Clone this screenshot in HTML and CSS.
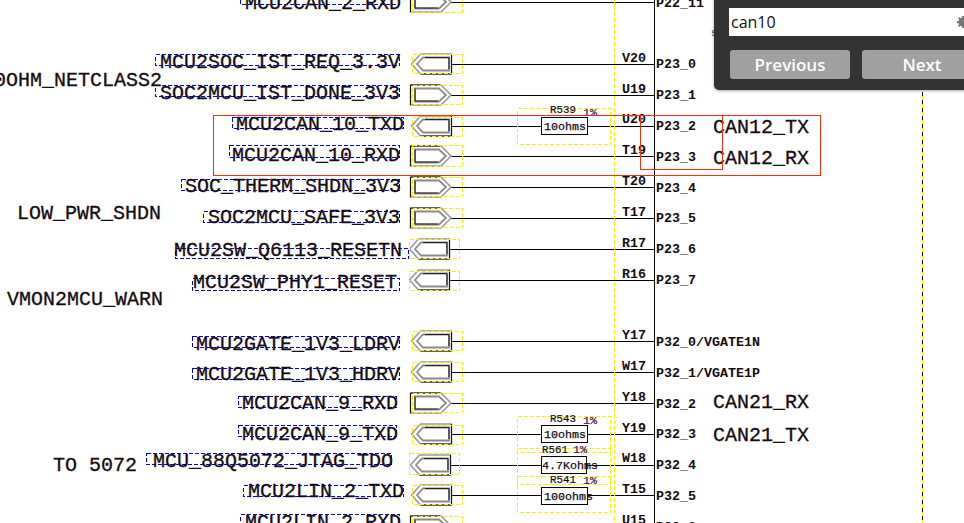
FILE: index.html
```html
<!DOCTYPE html>
<html lang="en">
<head>
<meta charset="utf-8">
<title>Schematic viewer</title>
<link rel="stylesheet" href="styles.css">
</head>
<body>
<main class="viewer">
<svg class="sheet" width="964" height="523" viewBox="0 0 964 523" xmlns="http://www.w3.org/2000/svg">
  <defs>
    <g id="conn-l">
      <path class="c-outer" d="M0.5 0 L9.5 -10 H40.5 V10 H9.5 Z"/>
      <path class="c-black" d="M40.5 -10 V10 M9.5 10 H40.5"/>
      <path class="c-inner" d="M6 0 L12 -6.5 H38 V6.5 H12 Z"/>
      <path class="c-dark" d="M14 -6.5 H38 V5"/>
    </g>
    <g id="conn-r">
      <path class="c-outer" d="M0.5 -10 H31 L41 0 L31 10 H0.5 Z"/>
      <path class="c-black" d="M0.5 -10 V10 M0.5 -10 H30"/>
      <path class="c-inner" d="M5 -6.5 H29 L36 0 L29 6.5 H5 Z"/>
      <path class="c-dark" d="M5 -6.5 V6 H28"/>
    </g>
  </defs>

  <path class="wire" d="M451 2.5H654 M451 64.5H654 M451 95.5H654 M451 126.5H541 M588 126.5H654 M451 156.5H654 M451 187.5H654 M451 218.5H654 M450 249.5H654 M450 280.5H654 M451 341.5H654 M451 372.5H654 M451 403.5H654 M451 434.5H541 M588 434.5H654 M450 465.5H541 M587 465.5H654 M451 495.5H541 M588 495.5H654"/>
  <path class="wire" d="M654.5 0V523"/>
  <path class="dash-yellow" d="M614.5 0V523"/>
  <path class="rail-yellow" d="M922.5 92V523"/>
  <path class="rail-black" d="M922.5 92V523"/>

  <use href="#conn-r" x="410" y="2"/>
  <use href="#conn-l" x="411" y="64"/>
  <use href="#conn-r" x="410" y="95"/>
  <use href="#conn-l" x="411" y="126"/>
  <use href="#conn-r" x="410" y="156"/>
  <use href="#conn-r" x="410" y="187"/>
  <use href="#conn-r" x="410" y="218"/>
  <use href="#conn-l" x="409" y="249"/>
  <use href="#conn-l" x="409" y="280"/>
  <use href="#conn-l" x="411" y="341"/>
  <use href="#conn-l" x="411" y="372"/>
  <use href="#conn-r" x="410" y="403"/>
  <use href="#conn-l" x="411" y="434"/>
  <use href="#conn-l" x="410" y="465"/>
  <use href="#conn-l" x="411" y="495"/>
  <use href="#conn-r" x="410" y="526"/>

  <g class="dash-yellow">
    <rect x="412.5" y="-7.5" width="50" height="20"/>
    <rect x="412.5" y="54.5" width="50" height="19"/>
    <rect x="412.5" y="85.5" width="50" height="19"/>
    <rect x="412.5" y="117.5" width="50" height="19"/>
    <rect x="412.5" y="145.5" width="50" height="21"/>
    <rect x="412.5" y="177.5" width="50" height="19"/>
    <rect x="412.5" y="208.5" width="50" height="19"/>
    <rect x="409.5" y="239.5" width="50" height="19"/>
    <rect x="409.5" y="271.5" width="50" height="19"/>
    <rect x="412.5" y="331.5" width="50" height="19"/>
    <rect x="412.5" y="362.5" width="50" height="19"/>
    <rect x="412.5" y="393.5" width="50" height="19"/>
    <rect x="412.5" y="425.5" width="50" height="19"/>
    <rect x="409.5" y="453.5" width="50" height="21"/>
    <rect x="412.5" y="485.5" width="50" height="19"/>
    <rect x="412.5" y="516.5" width="50" height="19"/>
    <rect x="517.5" y="108.5" width="93" height="36"/>
    <rect x="517.5" y="416.5" width="93" height="36"/>
    <rect x="517.5" y="448.5" width="93" height="36"/>
    <rect x="517.5" y="476.5" width="93" height="36"/>
  </g>

  <g class="dash-blue">
    <rect x="240.5" y="-6.5" width="159" height="11"/>
    <rect x="155.5" y="54.5" width="244" height="11"/>
    <rect x="155.5" y="85.5" width="244" height="11"/>
    <rect x="232.5" y="117.5" width="171" height="11"/>
    <rect x="229.5" y="145.5" width="170" height="12"/>
    <rect x="181.5" y="179.5" width="218" height="11"/>
    <rect x="203.5" y="211.5" width="196" height="11"/>
    <rect x="175.5" y="248.5" width="233" height="10"/>
    <rect x="192.5" y="278.5" width="207" height="12"/>
    <rect x="192.5" y="336.5" width="207" height="11"/>
    <rect x="192.5" y="368.5" width="207" height="11"/>
    <rect x="238.5" y="396.5" width="158" height="11"/>
    <rect x="238.5" y="425.5" width="158" height="11"/>
    <rect x="146.5" y="453.5" width="245" height="11"/>
    <rect x="243.5" y="485.5" width="160" height="11"/>
    <rect x="240.5" y="514.5" width="159" height="12"/>
  </g>

  <g class="net">
    <text x="245" y="9">MCU2CAN_2_RXD</text>
    <text x="160" y="68">MCU2SOC_IST_REQ_3.3V</text>
    <text x="160" y="99">SOC2MCU_IST_DONE_3V3</text>
    <text x="236" y="130">MCU2CAN_10_TXD</text>
    <text x="232" y="161">MCU2CAN_10_RXD</text>
    <text x="185" y="192">SOC_THERM_SHDN_3V3</text>
    <text x="208" y="223">SOC2MCU_SAFE_3V3</text>
    <text x="174" y="256">MCU2SW_Q6113_RESETN</text>
    <text x="193" y="288">MCU2SW_PHY1_RESET</text>
    <text x="196" y="350">MCU2GATE_1V3_LDRV</text>
    <text x="196" y="380">MCU2GATE_1V3_HDRV</text>
    <text x="242" y="409">MCU2CAN_9_RXD</text>
    <text x="242" y="440">MCU2CAN_9_TXD</text>
    <text x="153" y="467">MCU_88Q5072_JTAG_TDO</text>
    <text x="248" y="497">MCU2LIN_2_TXD</text>
    <text x="245" y="528">MCU2LIN_2_RXD</text>
    <text x="-30" y="86">100OHM_NETCLASS2</text>
    <text x="17" y="219">LOW_PWR_SHDN</text>
    <text x="7" y="305">VMON2MCU_WARN</text>
    <text x="53" y="471">TO 5072</text>
    <text x="713" y="133">CAN12_TX</text>
    <text x="713" y="164">CAN12_RX</text>
    <text x="713" y="408">CAN21_RX</text>
    <text x="713" y="441">CAN21_TX</text>
  </g>

  <g class="pin">
    <text x="622" y="62">V20</text>
    <text x="622" y="93">U19</text>
    <text x="622" y="123">U20</text>
    <text x="622" y="154">T19</text>
    <text x="622" y="185">T20</text>
    <text x="622" y="216">T17</text>
    <text x="622" y="247">R17</text>
    <text x="622" y="278">R16</text>
    <text x="622" y="339">Y17</text>
    <text x="622" y="370">W17</text>
    <text x="622" y="401">Y18</text>
    <text x="622" y="432">Y19</text>
    <text x="622" y="462">W18</text>
    <text x="622" y="493">T15</text>
    <text x="622" y="524">U15</text>
    <text x="656" y="7">P22_11</text>
    <text x="656" y="68">P23_0</text>
    <text x="656" y="99">P23_1</text>
    <text x="656" y="130">P23_2</text>
    <text x="656" y="161">P23_3</text>
    <text x="656" y="192">P23_4</text>
    <text x="656" y="222">P23_5</text>
    <text x="656" y="253">P23_6</text>
    <text x="656" y="284">P23_7</text>
    <text x="656" y="346">P32_0/VGATE1N</text>
    <text x="656" y="377">P32_1/VGATE1P</text>
    <text x="656" y="408">P32_2</text>
    <text x="656" y="438">P32_3</text>
    <text x="656" y="469">P32_4</text>
    <text x="656" y="500">P32_5</text>
    <text x="656" y="531">P32_6</text>
  </g>

  <g class="part">
    <rect x="541.5" y="117.5" width="46" height="17"/>
    <rect x="541.5" y="425.5" width="46" height="17"/>
    <rect x="541.5" y="456.5" width="45" height="17"/>
    <rect x="541.5" y="487.5" width="46" height="17"/>
  </g>

  <g class="refdes">
    <text x="550" y="113">R539</text>
    <text x="550" y="422">R543</text>
    <text x="542" y="453">R561</text>
    <text x="550" y="483">R541</text>
  </g>
  <g class="tol">
    <text x="583" y="116">1%</text>
    <text x="583" y="424">1%</text>
    <text x="573" y="453">1%</text>
    <text x="583" y="484">1%</text>
  </g>
  <g class="value">
    <text x="544" y="130">10ohms</text>
    <text x="544" y="438">10ohms</text>
    <text x="542" y="469">4.7Kohms</text>
    <text x="544" y="500">100ohms</text>
  </g>

  <rect class="hit" x="213.5" y="115.5" width="607" height="59.5"/>
  <rect class="hit" x="640.5" y="115.5" width="82" height="53.5"/>
  <text class="stray" x="711" y="36">s</text>
</svg>

<section class="find">
  <div class="find-input">
    <span>can10</span>
    <svg class="gear" width="12" height="12" viewBox="-1 0 16 16" xmlns="http://www.w3.org/2000/svg">
      <path d="M5.500 0h3v2.200l1.600.7 1.600-1.600 2 2-1.600 1.600.7 1.600H15v3h-2.200l-.7 1.600 1.600 1.600-2 2-1.600-1.600-1.600.7V16h-3v-2.200l-1.600-.7-1.600 1.600-2-2L2 11.100l-.7-1.600H-1v-3h2.300l.7-1.600L.4 3.300l2-2L4 2.900l1.500-.7z"/>
    </svg>
  </div>
  <div class="find-actions">
    <button class="find-btn" type="button">Previous</button>
    <button class="find-btn" type="button">Next</button>
  </div>
</section>
</main>
</body>
</html>
```
FILE: styles.css
```css
html, body {
  margin: 0;
  padding: 0;
  background: #fff;
}

.viewer {
  position: relative;
  width: 964px;
  height: 523px;
  overflow: hidden;
}

.sheet {
  display: block;
}

.wire {
  fill: none;
  stroke: #000;
  stroke-width: 1;
  shape-rendering: crispEdges;
}

.dash-yellow {
  fill: none;
  stroke: #ffee00;
  stroke-width: 1;
  stroke-dasharray: 4 2;
  shape-rendering: crispEdges;
}

.rail-yellow {
  fill: none;
  stroke: #ffee00;
  stroke-width: 1;
  shape-rendering: crispEdges;
}

.rail-black {
  fill: none;
  stroke: #000;
  stroke-width: 1;
  stroke-dasharray: 4 4;
  shape-rendering: crispEdges;
}

.dash-blue {
  fill: none;
  stroke: #0000e6;
  stroke-width: 1;
  stroke-dasharray: 4 2;
  shape-rendering: crispEdges;
}

.c-outer {
  fill: #fff;
  stroke: #9a9a9a;
  stroke-width: 1.6;
}

.c-black {
  fill: none;
  stroke: #111;
  stroke-width: 1;
}

.c-inner {
  fill: none;
  stroke: #8a8a8a;
  stroke-width: 1.8;
}

.c-dark {
  fill: none;
  stroke: #222;
  stroke-width: 1;
}

.net text,
.pin text,
.refdes text,
.tol text,
.value text {
  font-family: "Liberation Mono", monospace;
  fill: #140c10;
}

.net text {
  font-size: 20px;
  stroke: #140c10;
  stroke-width: 0.3px;
  white-space: pre;
}

.pin text {
  font-size: 13.33px;
  font-weight: 700;
}

.part rect {
  fill: #fff;
  stroke: #000;
  stroke-width: 1;
  shape-rendering: crispEdges;
}

.refdes text {
  font-size: 10.8px;
  stroke: #140c10;
  stroke-width: 0.2px;
}

.tol text {
  font-size: 11.67px;
  fill: #40105a;
  stroke: #40105a;
  stroke-width: 0.2px;
}

.value text {
  font-size: 11.67px;
  stroke: #140c10;
  stroke-width: 0.25px;
}

.hit {
  fill: none;
  stroke: #f03010;
  stroke-width: 1;
  shape-rendering: crispEdges;
}

.stray {
  font-family: "Liberation Mono", monospace;
  font-size: 10px;
  fill: #303060;
}

.find {
  position: absolute;
  left: 714px;
  top: -4px;
  width: 270px;
  height: 94px;
  box-sizing: border-box;
  padding: 12px 20px 0 15px;
  background: #333;
  border-radius: 0 0 0 5px;
  box-shadow: 0 1px 3px rgba(0, 0, 0, 0.35);
  display: flex;
  flex-direction: column;
  gap: 14px;
}

.find-input {
  height: 28px;
  flex: none;
  background: #fff;
  padding: 0 2px;
  display: flex;
  align-items: center;
  justify-content: space-between;
  font-family: "Open Sans", sans-serif;
  font-size: 16px;
  color: #111;
}

.gear {
  fill: #777;
  margin-right: -7px;
  flex: none;
}

.find-actions {
  display: flex;
  gap: 12px;
  padding-left: 1px;
}

.find-btn {
  width: 120px;
  height: 29px;
  flex: none;
  padding: 0;
  border: 0;
  border-radius: 3px;
  background: #a0a0a0;
  color: #fff;
  font-family: "Open Sans", sans-serif;
  font-size: 17px;
  font-weight: 600;
}
```
